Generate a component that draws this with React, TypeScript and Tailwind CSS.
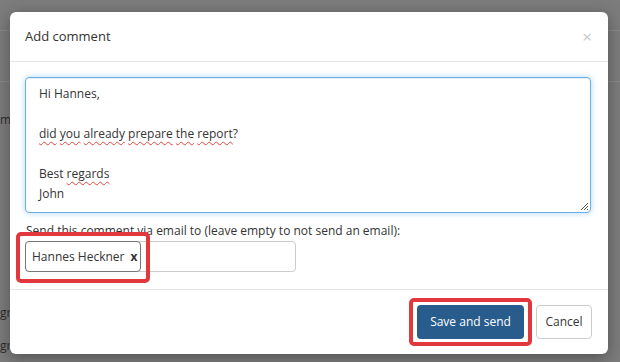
import React from 'react';

const Squiggle: React.FC<{ children: React.ReactNode }> = ({ children }) => (
  <span className="underline decoration-wavy decoration-[#e0443e] decoration-1 underline-offset-[3px]">
    {children}
  </span>
);

const App: React.FC = () => {
  return (
    <div className="relative h-[362px] w-[620px] overflow-hidden bg-[#7c7c7c] font-['Open_Sans',sans-serif] text-[#333]">
      {/* page behind the backdrop */}
      <div className="flex flex-col">
        <div className="h-[31px] border-b border-[#8a8a8a]" />
        <div className="h-[51px] border-b border-[#8a8a8a]" />
        <div className="pt-[30px] text-[12px] leading-[16px] text-[#2c2c2c]">m</div>
        <div className="pt-[177px] text-[12px] leading-[16px] text-[#2c2c2c]">gr</div>
        <div className="pt-[17px] text-[12px] leading-[16px] text-[#2c2c2c]">gr</div>
      </div>

      {/* modal */}
      <div className="absolute inset-0 pl-[10px] pt-[12px]">
        <div className="relative flex h-[342px] w-[598px] flex-col rounded-[6px] bg-white shadow-[0_4px_16px_rgba(0,0,0,0.35)]">
          {/* Header */}
          <div className="flex h-[50px] items-center justify-between border-b border-[#e5e5e5] pl-[15px] pr-[16px]">
            <h4 className="text-[13px] text-[#333]">Add comment</h4>
            <span className="text-[17px] leading-none text-[#c8c8c8]">×</span>
          </div>

          {/* Body */}
          <div className="flex flex-1 flex-col pl-[15px] pt-[15px]">
            <div className="relative h-[136px] w-[566px] rounded-[4px] border border-[#66afe9] py-[6px] pl-[13px] pr-[10px] text-[12px] leading-[20px] shadow-[inset_0_1px_1px_rgba(0,0,0,0.075),0_0_6px_rgba(102,175,233,0.5)]">
              <div>Hi Hannes,</div>
              <div>&nbsp;</div>
              <div>
                <Squiggle>did</Squiggle> <Squiggle>you</Squiggle> <Squiggle>already</Squiggle>{' '}
                <Squiggle>prepare</Squiggle> <Squiggle>the</Squiggle> <Squiggle>report</Squiggle>?
              </div>
              <div>&nbsp;</div>
              <div>
                Best <Squiggle>regards</Squiggle>
              </div>
              <div>John</div>
              <svg className="absolute bottom-[1px] right-[1px]" width="9" height="9" viewBox="0 0 9 9">
                <path d="M8 1 L1 8 M8 4 L4 8 M8 7 L7 8" stroke="#555" strokeWidth="1" />
              </svg>
            </div>

            <label className="mt-[10px] pl-[1px] text-[12px] leading-[16px] text-[#333]">
              Send this comment via email to (leave empty to not send an email):
            </label>

            <div className="relative mt-[2px] flex h-[31px] w-[271px] rounded-[4px] border border-[#ccc]">
              <div className="-m-[1px] flex w-[116px] items-center gap-[6px] rounded-[4px] border border-[#777] bg-white pl-[6px] text-[12px]">
                <span>Hannes Heckner</span>
                <span className="font-bold text-[#333]">x</span>
              </div>
              {/* highlight */}
              <div className="absolute -left-[10px] -top-[10px] h-[51px] w-[134px] rounded-[5px] border-[4px] border-[#e2383d]" />
            </div>
          </div>

          {/* Footer */}
          <div className="flex h-[65px] items-center justify-end gap-[12px] border-t border-[#e5e5e5] pr-[16px]">
            <div className="relative">
              <button className="h-[34px] w-[107px] rounded-[4px] bg-[#285c8c] text-[12px] text-white">
                Save and send
              </button>
              <div className="absolute -left-[8px] -top-[7px] h-[48px] w-[123px] rounded-[5px] border-[4px] border-[#e2383d]" />
            </div>
            <button className="h-[34px] w-[56px] rounded-[4px] border border-[#ccc] bg-white text-[12px] text-[#333]">
              Cancel
            </button>
          </div>
        </div>
      </div>
    </div>
  );
};

export default App;
